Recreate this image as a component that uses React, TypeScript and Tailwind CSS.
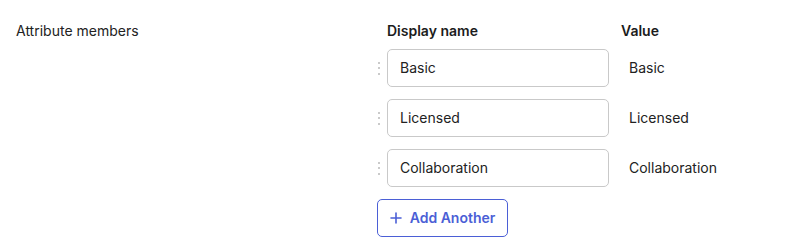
import React from "react";

const rows = ["Basic", "Licensed", "Collaboration"];

function Handle() {
  return (
    <div className="w-[10px] h-[38px] flex flex-col items-start justify-center gap-[3.5px] pl-[0px]">
      <span className="block w-[2px] h-[2px] rounded-full bg-[#b9b9b9]" />
      <span className="block w-[2px] h-[2px] rounded-full bg-[#b9b9b9]" />
      <span className="block w-[2px] h-[2px] rounded-full bg-[#b9b9b9]" />
    </div>
  );
}

export default function App() {
  return (
    <div
      className="w-[806px] h-[243px] bg-white flex pt-[21px] pl-4 text-[14px] leading-5 text-[#222]"
      style={{ fontFamily: "Inter, 'Noto Sans', sans-serif" }}
    >
      <div className="w-[361px]">Attribute members</div>
      <div className="flex flex-col">
        <div className="flex font-semibold text-[#1c1c1c]">
          <div className="ml-[10px] w-[222px]">Display name</div>
          <div className="ml-3">Value</div>
        </div>
        <div className="flex flex-col gap-3 mt-2">
          {rows.map((r) => (
            <div key={r} className="flex items-center">
              <div className="pl-[1px]">
                <Handle />
              </div>
              <div className="w-[222px] h-[38px] border border-[#c9c9c9] rounded-[5px] flex items-center px-3 -ml-[1px]">
                {r}
              </div>
              <div className="ml-3 pl-2">{r}</div>
            </div>
          ))}
        </div>
        <div className="mt-3">
          <button className="h-[38px] w-[131px] border border-[#4b5fd6] rounded-[5px] flex items-center justify-center gap-2 text-[#4b5fd6] font-semibold">
            <svg width="12" height="12" viewBox="0 0 12 12" fill="none" stroke="currentColor" strokeWidth="1.6" strokeLinecap="round">
              <path d="M6 1v10M1 6h10" />
            </svg>
            <span>Add Another</span>
          </button>
        </div>
      </div>
    </div>
  );
}
